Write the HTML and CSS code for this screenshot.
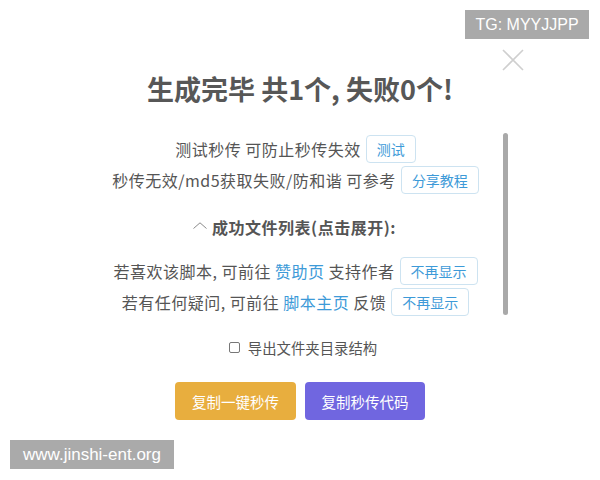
FILE: index.html
```html
<!DOCTYPE html>
<html lang="zh-CN">
<head>
<meta charset="utf-8">
<title>生成完毕</title>
<link rel="stylesheet" href="styles.css">
</head>
<body>
<div class="tg-badge">TG: MYYJJPP</div>
<div class="dialog">
  <button class="close" aria-label="关闭">
    <svg width="22" height="22" viewBox="0 0 22 22"><path d="M1 1 L21 21 M21 1 L1 21" stroke="#cfcfcf" stroke-width="1.6" fill="none"/></svg>
  </button>
  <h2 class="title">生成完毕 共1个, 失败0个!</h2>
  <div class="scroll">
    <div class="content">
      <div class="row"><span class="txt">测试秒传 可防止秒传失效</span><button class="mini">测试</button></div>
      <div class="row"><span class="txt">秒传无效/md5获取失败/防和谐 可参考</span><button class="mini">分享教程</button></div>
      <div class="files"><svg class="chev" width="14" height="7" viewBox="0 0 14 7"><path d="M0.5 6.5 L7 0.8 L13.5 6.5" stroke="#8a8a8a" stroke-width="1" fill="none"/></svg><span class="txt">成功文件列表(点击展开):</span></div>
      <div class="row"><span class="txt">若喜欢该脚本, 可前往 <a class="link">赞助页</a> 支持作者</span><button class="mini">不再显示</button></div>
      <div class="row"><span class="txt">若有任何疑问, 可前往 <a class="link">脚本主页</a> 反馈</span><button class="mini">不再显示</button></div>
    </div>
    <div class="thumb"></div>
  </div>
  <label class="check"><span class="box"></span><span>导出文件夹目录结构</span></label>
  <div class="actions">
    <button class="btn btn-yellow">复制一键秒传</button>
    <button class="btn btn-purple">复制秒传代码</button>
  </div>
</div>
<div class="site-badge">www.jinshi-ent.org</div>
</body>
</html>
```
FILE: styles.css
```css
html, body {
  margin: 0;
  padding: 0;
  background: #fff;
}
body {
  width: 600px;
  height: 480px;
  position: relative;
  overflow: hidden;
  font-family: "Noto Sans CJK SC", "Noto Sans", sans-serif;
  color: #555;
}
.tg-badge {
  position: absolute;
  left: 465px;
  top: 10px;
  width: 124px;
  height: 29px;
  background: #a9a9a9;
  color: #fff;
  font-family: "Liberation Sans", Arial, sans-serif;
  font-size: 16px;
  line-height: 29px;
  text-align: center;
}
.site-badge {
  position: absolute;
  left: 10px;
  top: 440px;
  width: 164px;
  height: 29px;
  background: #aaaaaa;
  color: #fff;
  font-family: "Liberation Sans", Arial, sans-serif;
  font-size: 17px;
  line-height: 29px;
  text-align: center;
}
.dialog {
  position: relative;
  padding-top: 72px;
  display: flex;
  flex-direction: column;
  align-items: center;
}
.close {
  position: absolute;
  left: 502px;
  top: 49px;
  width: 22px;
  height: 22px;
  padding: 0;
  border: 0;
  background: transparent;
}
.close svg { display: block; }
.title {
  margin: 0;
  font-size: 27px;
  line-height: 34px;
  font-weight: 700;
  color: #575757;
}
.scroll {
  margin-top: 27px;
  align-self: flex-start;
  margin-left: 88px;
  width: 420px;
  display: flex;
}
.content {
  width: 415px;
  display: flex;
  flex-direction: column;
  font-size: 16px;
  color: #555;
}
.txt { letter-spacing: 0.5px; }
.thumb {
  width: 5px;
  height: 182px;
  border-radius: 3px;
  background: #a9a9a9;
}
.row {
  height: 31px;
  display: flex;
  align-items: center;
  justify-content: center;
  gap: 5px;
  white-space: nowrap;
}
.mini {
  height: 28px;
  padding: 0 10px;
  border: 1px solid #cde3f1;
  border-radius: 4px;
  background: #fff;
  color: #3d9ad8;
  font-family: inherit;
  font-size: 14px;
  line-height: 26px;
}
.link {
  color: #3d9ad8;
  text-decoration: none;
}
.files {
  margin: 20px 0 16px;
  height: 24px;
  display: flex;
  align-items: center;
  justify-content: center;
  gap: 5px;
  font-weight: 700;
  color: #555;
  padding-right: 2px;
}
.chev { display: block; margin-top: -4px; }
.check {
  margin-top: 20px;
  height: 20px;
  display: flex;
  align-items: center;
  gap: 8px;
  font-size: 14.4px;
  color: #555;
  padding-left: 6px;
}
.box {
  width: 9px;
  height: 9px;
  border: 1px solid #777;
  border-radius: 2px;
}
.actions {
  margin-top: 25px;
  display: flex;
  gap: 9px;
}
.btn {
  height: 38px;
  width: 121px;
  border: 0;
  border-radius: 4px;
  color: #fff;
  font-family: inherit;
  font-size: 14.5px;
}
.btn-yellow { background: #e8ae3e; }
.btn-purple { background: #7066e0; width: 120px; }
```
